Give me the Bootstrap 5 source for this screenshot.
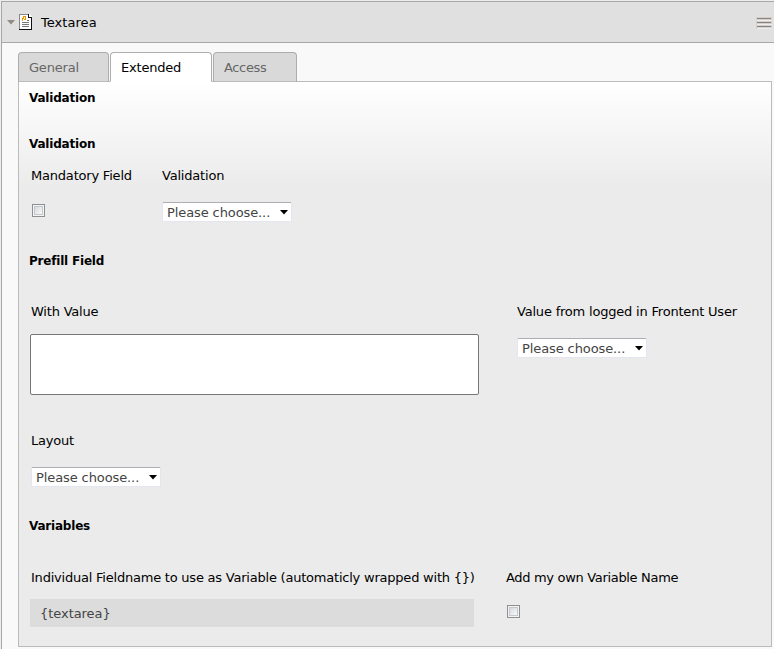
<!DOCTYPE html>
<html lang="en">
<head>
<meta charset="utf-8">
<title>Textarea</title>
<link href="https://cdn.jsdelivr.net/npm/bootstrap@5.3.0/dist/css/bootstrap.min.css" rel="stylesheet">
<style>
body{background:#ededed;font:13px/20px "DejaVu Sans",Verdana,sans-serif;color:#000;letter-spacing:-.2px;height:649px;overflow:hidden}
.panel{margin:1px 0 0 1px;height:648px;background:#f9f9f9;border-left:1px solid #a8a8a8;border-top:1px solid #a8a8a8}
.panel-head{height:41px;background:#e0e0e0;border-bottom:1px solid #a8a8a8;padding:0 2px 0 5px}
.title{letter-spacing:.05px;padding-top:1px}
.burger{margin-top:2px}
.nav-tabs{margin:9px 0 -1px 16px;border:0;position:relative}
.nav-tabs .nav-link{height:30px;margin:0 1px 0 0;padding:5px 10px;border:1px solid #adadad;border-bottom-color:#bbb;border-radius:4px 4px 0 0;background:#d9d9d9;color:#666}
.nav-tabs .nav-link.active{background:#fff;color:#000;border-color:#adadad;border-bottom-color:#fff}
.t1{width:91px}.t2{width:102px}.t3{width:84px}
.nav-tabs .t3{letter-spacing:-.35px}
.pane-box{margin:0 2px 0 16px;height:566px;border:1px solid #bbb;background:linear-gradient(#fff 0,#ebebeb 105px);padding:6px 0 0 10px}
.sec{font-size:12px;font-weight:bold;height:20px;line-height:20px;margin:0;letter-spacing:-.2px}
.lbl{display:block;height:20px;white-space:nowrap}
.form-select{width:130px;height:20px;margin-top:16px;padding:1px 0 0 4px;border:1px solid #e3e5ef;border-top-color:#abadb3;border-radius:2px;background:#fff;color:#444;font:inherit;line-height:18px;letter-spacing:-.1px;white-space:nowrap;display:flex;align-items:center}
.form-select svg{margin-left:auto;margin-right:3px}
.form-control{width:449px;height:61px;border:1px solid #777;border-radius:2px;background:#fff;padding:4px;resize:none;margin:12px 0 0 1px}
.form-check-input[type=checkbox]{display:block;width:13px;height:13px;margin:18px 0 0 1px;border:1px solid #8e8f8f;border-radius:0;background:linear-gradient(135deg,#cbcfd5,#f6f6f6 75%);box-shadow:inset 0 0 0 1px #f4f4f4,inset 0 0 0 2px #c4c8ce}
.varname{width:444px;height:28px;margin:11px 0 0 1px;background:#dcdcdc;color:#444;padding:5px 10px 3px;letter-spacing:-.05px}
.g1{margin-top:26px}.g2{margin-top:12px;margin-left:2px}.c1{width:131px}
.g3{margin-top:29px}.g4{margin-top:31px}.c2{width:488px}
.g5{margin-top:36px;margin-left:2px}.g6{margin-top:29px}.g7{margin-top:32px}.c3{width:477px}
.c2 .lbl,.c3 .lbl{padding-left:2px}
.g7 .lbl{letter-spacing:-.22px}
.g7 .own{letter-spacing:-.32px}
.g7 .form-check-input[type=checkbox]{margin-top:17px}
</style>
<script src="https://cdn.jsdelivr.net/npm/bootstrap@5.3.0/dist/js/bootstrap.bundle.min.js"></script>
</head>
<body>
<main class="panel">
  <header class="panel-head d-flex align-items-center">
    <svg width="8" height="5" viewBox="0 0 8 5"><path d="M0 0h8L4 4.5z" fill="#918b82"/></svg>
    <svg class="ms-1" width="14" height="16" viewBox="0 0 14 16" shape-rendering="crispEdges"><path d="M0 0h10l3 3v12H0z" fill="#fff"/><path d="M.5 15V.5H10" fill="none" stroke="#888"/><path d="M9 0h1v1h1v1h1v1h1v13H0v-1h12V4H9z" fill="#111"/><path d="M10 1v2h2z" fill="#fff"/><path d="M4 2h3v4H5V5h1V3H5v2H4v2H3V4h1z" fill="#f29400"/><path d="M8 6.500h2M3 8.500h7M3 10.500h7M3 12.500h7" stroke="#777"/></svg>
    <span class="title ms-2">Textarea</span>
    <svg class="burger ms-auto" width="16" height="12" viewBox="0 0 16 12" shape-rendering="crispEdges"><path d="M0 0h16v12H0z" fill="#d3d1cf"/><path d="M1 1.500h14M1 5.500h14M1 9.500h14" stroke="#8b827a"/><path d="M1 3.500h15M1 7.500h15M1 11.500h15" stroke="#eee"/></svg>
  </header>
  <nav class="nav nav-tabs">
    <a class="nav-link t1" href="#">General</a>
    <a class="nav-link active t2" href="#">Extended</a>
    <a class="nav-link t3" href="#">Access</a>
  </nav>
  <section class="pane-box">
    <h2 class="sec">Validation</h2>
    <h2 class="sec g1">Validation</h2>
    <div class="g2 d-flex">
      <div class="c1"><span class="lbl">Mandatory Field</span><input type="checkbox" class="form-check-input"></div>
      <div><span class="lbl">Validation</span><div class="form-select">Please choose...<svg width="8" height="5"><path d="M0 0h8L4 4.500z"/></svg></div></div>
    </div>
    <h2 class="sec g3">Prefill Field</h2>
    <div class="g4 d-flex">
      <div class="c2"><span class="lbl">With Value</span><textarea class="form-control"></textarea></div>
      <div><span class="lbl">Value from logged in Frontent User</span><div class="form-select">Please choose...<svg width="8" height="5"><path d="M0 0h8L4 4.500z"/></svg></div></div>
    </div>
    <div class="g5"><span class="lbl">Layout</span><div class="form-select">Please choose...<svg width="8" height="5"><path d="M0 0h8L4 4.500z"/></svg></div></div>
    <h2 class="sec g6">Variables</h2>
    <div class="g7 d-flex">
      <div class="c3"><span class="lbl">Individual Fieldname to use as Variable (automaticly wrapped with {})</span><div class="varname">{textarea}</div></div>
      <div><span class="lbl own">Add my own Variable Name</span><input type="checkbox" class="form-check-input"></div>
    </div>
  </section>
</main>
</body>
</html>
